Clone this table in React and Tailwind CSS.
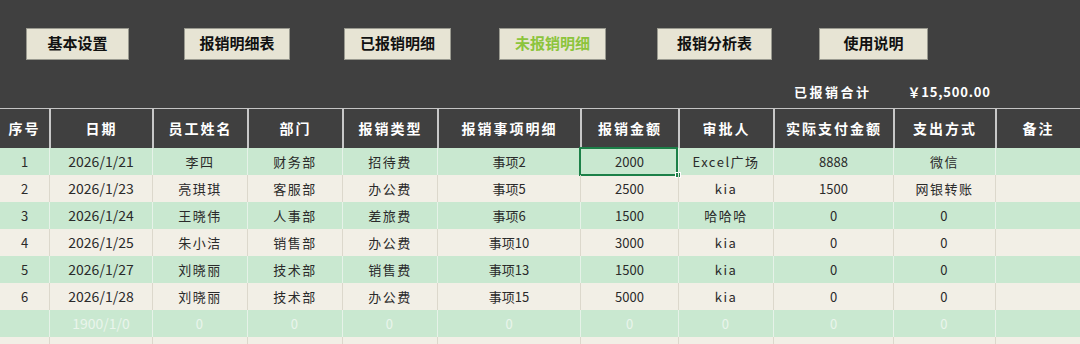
import React from "react";

const buttons = [
  { label: "基本设置", cls: "ml-[26px] w-[103px]" },
  { label: "报销明细表", cls: "ml-[55px] w-[106px]" },
  { label: "已报销明细", cls: "ml-[54px] w-[107px]" },
  { label: "未报销明细", cls: "ml-[48px] w-[107px] text-[#8cc43c]", active: true },
  { label: "报销分析表", cls: "ml-[51px] w-[115px]" },
  { label: "使用说明", cls: "ml-[47px] w-[109px]" },
];

const headers = ["序号", "日期", "员工姓名", "部门", "报销类型", "报销事项明细", "报销金额", "审批人", "实际支付金额", "支出方式", "备注"];

const rows = [
  ["1", "2026/1/21", "李四", "财务部", "招待费", "事项2", "2000", "Excel广场", "8888", "微信", ""],
  ["2", "2026/1/23", "亮琪琪", "客服部", "办公费", "事项5", "2500", "kia", "1500", "网银转账", ""],
  ["3", "2026/1/24", "王晓伟", "人事部", "差旅费", "事项6", "1500", "哈哈哈", "0", "0", ""],
  ["4", "2026/1/25", "朱小洁", "销售部", "办公费", "事项10", "3000", "kia", "0", "0", ""],
  ["5", "2026/1/27", "刘晓丽", "技术部", "销售费", "事项13", "1500", "kia", "0", "0", ""],
  ["6", "2026/1/28", "刘晓丽", "技术部", "办公费", "事项15", "5000", "kia", "0", "0", ""],
  ["", "1900/1/0", "0", "0", "0", "0", "0", "0", "0", "0", ""],
  ["", "", "", "", "", "", "", "", "", "", ""],
];

// columns whose text is spread out like Excel's distributed alignment
const spaced = [2, 3, 4, 7, 9];

const grid = "grid grid-cols-[49px_103px_95px_95px_95px_143px_98px_95px_120px_102px_85px]";

export default function App() {
  return (
    <div className="w-[1080px] h-[344px] overflow-hidden bg-[#404040] font-['Noto_Sans_CJK_SC',sans-serif]">
      {/* top bar with sheet buttons */}
      <div className="h-[108px]">
        <div className="flex pt-[28px]">
          {buttons.map((b) => (
            <div
              key={b.label}
              className={`h-[32px] flex items-center justify-center bg-[#e7e4d4] border border-[#9a9a90] text-[15px] font-bold pb-[2px] ${b.active ? "" : "text-[#111]"} ${b.cls}`}
            >
              {b.label}
            </div>
          ))}
        </div>
        <div className="flex mt-[23px] pl-[794px] text-white text-[13px] font-bold h-[18px] items-center">
          <span className="tracking-[2.5px]">已报销合计</span>
          <span className="ml-[36px] tracking-[0.8px]">￥15,500.00</span>
        </div>
      </div>

      {/* table */}
      <div className="border-t border-[#c4c4c4]">
        <div className={grid}>
          {headers.map((h, i) => (
            <div
              key={h}
              className={`h-[39px] flex items-center justify-center text-white text-[14px] font-bold tracking-[2px] ${i > 0 ? "border-l-2 border-[#c8c8c8]" : ""}`}
            >
              {h}
            </div>
          ))}
        </div>
        {rows.map((r, ri) => (
          <div key={ri} className={`${grid} ${ri % 2 === 0 ? "bg-[#c9e8d0]" : "bg-[#f2efe6]"}`}>
            {r.map((c, ci) => (
              <div
                key={ci}
                className={`relative h-[27px] flex items-center justify-center ${ci === 1 ? "text-[14px]" : "text-[13px]"} ${ri === 6 ? "text-[#eaf5ec]" : "text-[#2a2a2a]"} ${spaced.includes(ci) ? "tracking-[1.5px]" : ""} ${ci > 0 ? (ri % 2 === 0 ? "border-l border-[#e6f2e8]" : "border-l border-[#dcd8cc]") : ""}`}
              >
                {c}
                {ri === 0 && ci === 6 && (
                  <>
                    <div className="absolute -top-[1px] -bottom-[1px] -left-[2px] right-0 border-2 border-[#1c8048]" />
                    <div className="absolute -right-[3px] -bottom-[3px] w-[6px] h-[6px] bg-[#1c8048] border border-white" />
                  </>
                )}
              </div>
            ))}
          </div>
        ))}
      </div>
    </div>
  );
}
